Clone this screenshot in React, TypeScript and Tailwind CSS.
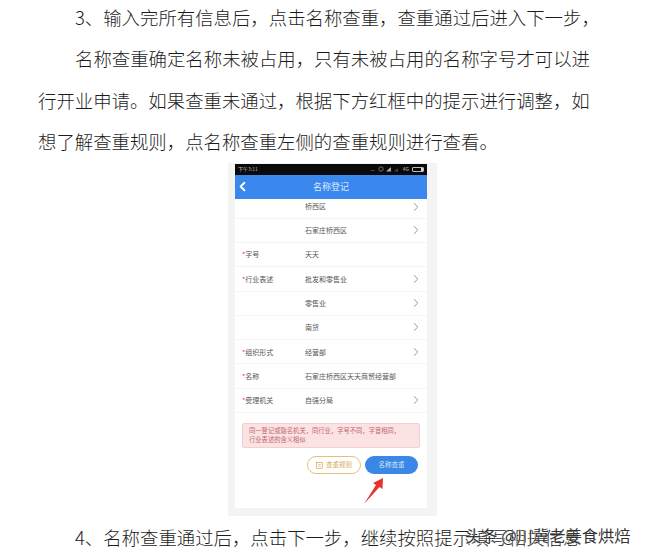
import { ChevronLeft, ChevronRight } from "lucide-react"

const rows = [
  { label: "", value: "桥西区", arrow: true },
  { label: "", value: "石家庄桥西区", arrow: true },
  { label: "字号", value: "天天", arrow: false },
  { label: "行业表述", value: "批发和零售业", arrow: true },
  { label: "", value: "零售业", arrow: true },
  { label: "", value: "南货", arrow: true },
  { label: "组织形式", value: "经营部", arrow: true },
  { label: "名称", value: "石家庄桥西区天天商贸经营部", arrow: false },
  { label: "受理机关", value: "自强分局", arrow: true },
]

export default function App() {
  return (
    <div
      className="relative w-[645px] h-[557px] overflow-hidden bg-white text-[#1c1c1c]"
      style={{ fontFamily: '"Noto Sans CJK SC", "Liberation Serif", serif' }}
    >
      <div className="pl-[38px] -mt-[3px] text-[18.4px] leading-[41.4px] font-light whitespace-nowrap">
        <p className="pl-[37px]">3、输入完所有信息后，点击名称查重，查重通过后进入下一步，</p>
        <p className="pl-[37px]">名称查重确定名称未被占用，只有未被占用的名称字号才可以进</p>
        <p>行开业申请。如果查重未通过，根据下方红框中的提示进行调整，如</p>
        <p>想了解查重规则，点名称查重左侧的查重规则进行查看。</p>
      </div>

      <div className="ml-[228px] w-[209px] h-[353px] bg-[#f4f4f4] pl-[7px] pt-px">
        <div className="w-[192px] h-[344px] bg-white">
          <div className="h-[11px] bg-[#0a0a0a] flex items-center justify-between px-[3px] text-[5px] text-[#bbbbbb]">
            <span>下午3:11</span>
            <span className="flex items-center gap-[3px]">
              <span>...</span>
              <svg width="22" height="6" viewBox="0 0 22 6">
                <circle cx="3" cy="3" r="2.2" fill="none" stroke="#999" strokeWidth="0.7" />
                <path d="M8 5.5 L13 5.5 L13 1 Z" fill="#aaa" />
                <path d="M16 5.5 L20 5.5 L20 2 Z" fill="#444" />
              </svg>
              <span>4G</span>
              <span className="w-[12px] h-[5px] border-[0.5px] border-[#bbb] rounded-[1px] flex justify-end">
                <span className="w-[2px] bg-[#ddd]" />
              </span>
            </span>
          </div>
          <div className="relative h-[24px] bg-[#3a87ee] flex items-center justify-center text-[9px] text-[#dbe9fb]">
            <ChevronLeft className="absolute left-0 top-[4px] w-[15px] h-[15px] text-white" strokeWidth={3} />
            名称登记
          </div>
          {rows.map((row, i) => (
            <div
              key={row.value}
              className={
                i === 0
                  ? "h-[20px] pb-[3px] flex items-center border-b border-[#f5f5f5] text-[7px] text-[#555555]"
                  : "h-[24.3px] flex items-center border-b border-[#f5f5f5] text-[7px] text-[#555555]"
              }
            >
              <span className="w-[70px] pl-[7px]">
                {row.label && <span className="text-[#d9344a]">*</span>}
                {row.label}
              </span>
              <span className="flex-1">{row.value}</span>
              {row.arrow && <ChevronRight className="w-[14px] h-[14px] mr-[4px] text-[#8f8f8f]" strokeWidth={1.6} />}
            </div>
          ))}
          <div className="px-[7px] pt-[10px] relative">
            <div className="h-[25px] bg-[#fbe3e4] border border-[#f2cfd2] rounded-[2px] px-[6px] py-[2px] text-[6.3px] leading-[9px] text-[#c4656c] whitespace-nowrap">
              <p>同一登记或隐名机关，同行业，字号不同，字音相同，</p>
              <p>行业表述的含义相似</p>
            </div>
            <div className="flex justify-end gap-[4px] mt-[8px] pr-[2px]">
              <div className="w-[54px] h-[18px] border border-[#e3c07f] rounded-full flex items-center justify-center gap-[3px] text-[6.5px] text-[#d8a858]">
                <svg width="7" height="7" viewBox="0 0 7 7">
                  <rect x="0.5" y="0.5" width="6" height="6" fill="none" stroke="#d8a858" strokeWidth="0.7" />
                  <path d="M2 2.5 H5 M2 4.5 H5" stroke="#d8a858" strokeWidth="0.6" />
                </svg>
                查重规则
              </div>
              <div className="w-[53px] h-[18px] bg-[#3a87e6] rounded-full flex items-center justify-center text-[6.5px] text-[#d6e6fa]">
                名称查重
              </div>
            </div>
            <svg className="absolute left-[128px] top-[64px]" width="24" height="28" viewBox="0 0 24 28">
              <path d="M1 27 L13 8 L10 6 L20 1 L19.5 12 L16.5 10 Z" fill="#e5342c" />
            </svg>
          </div>
        </div>
      </div>

      <p className="absolute left-[75px] top-[517px] text-[18.4px] leading-[41.4px] font-light whitespace-nowrap">
        4、名称查重通过后，点击下一步，继续按照提示填写相关信息
      </p>
      <p
        className="absolute left-[465px] top-[524px] text-[16.3px] leading-[22px] text-[#333333] whitespace-nowrap"
        style={{ textShadow: "0 0 1px #fff, 0 0 1px #fff" }}
      >
        头条 @川冀老姜食烘焙
      </p>
    </div>
  )
}
